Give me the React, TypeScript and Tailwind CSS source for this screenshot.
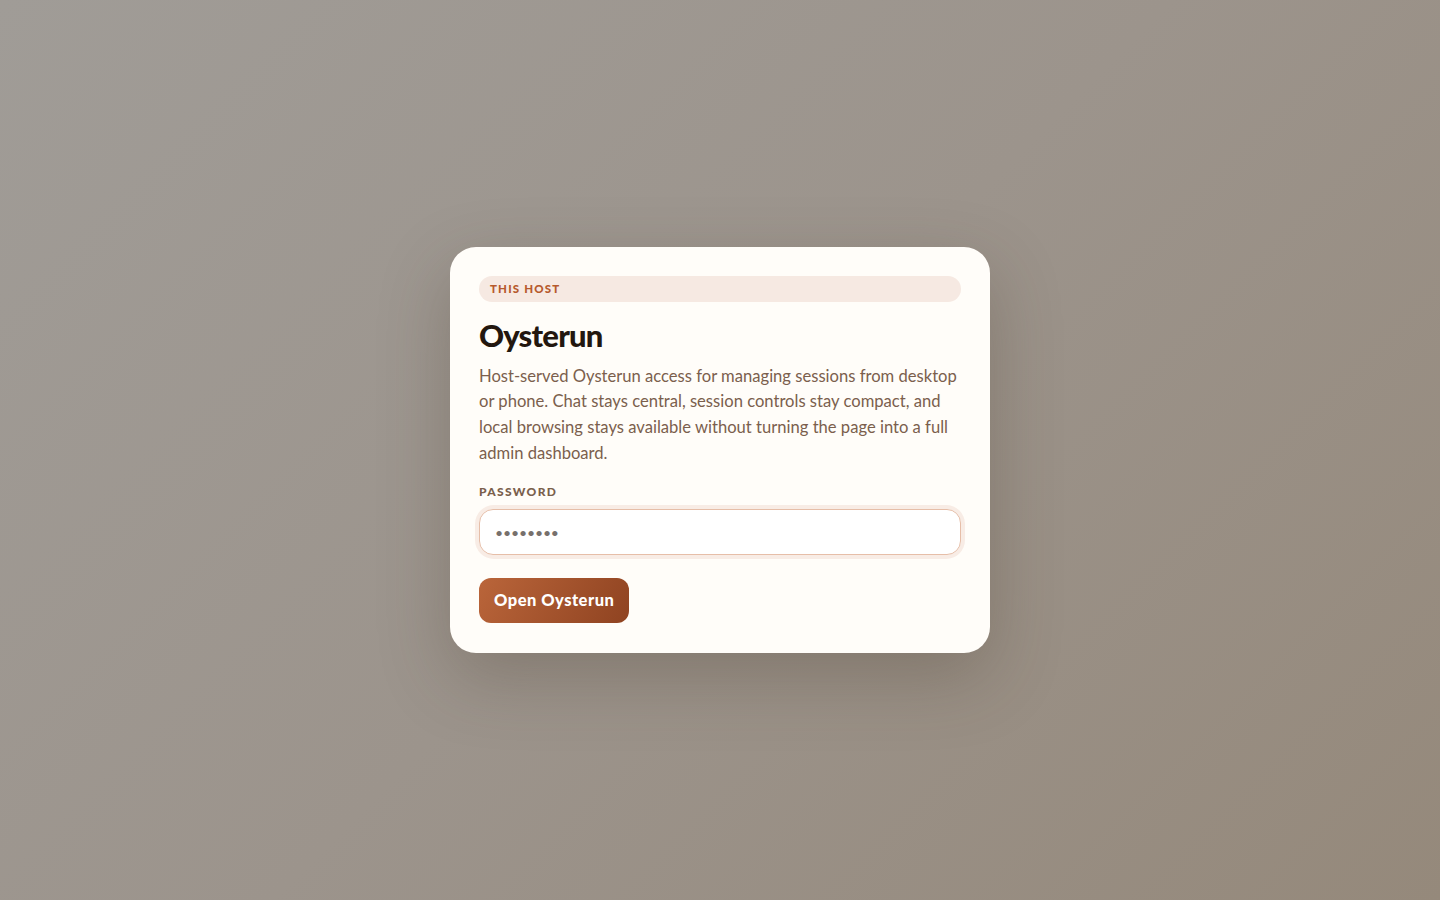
import React from "react";

export default function App() {
  return (
    <div
      className="min-h-screen w-full flex items-center justify-center bg-[linear-gradient(135deg,#a09c97_0%,#9c948c_50%,#95897b_100%)]"
      style={{ fontFamily: "Lato, 'Noto Sans', sans-serif" }}
    >
      <div className="w-[540px] rounded-[26px] bg-[#fffdf9] px-[29px] pt-[29px] pb-[30px] shadow-[0_24px_70px_rgba(70,55,40,0.28)]">
        <div className="h-[26px] rounded-full bg-[#f6e9e2] flex items-center pl-[11px]">
          <span className="text-[11.5px] font-black tracking-[0.1em] text-[#b65a2d] uppercase leading-none">
            This host
          </span>
        </div>
        <h1 className="mt-[15px] text-[31px] leading-[36px] font-black tracking-[-0.025em] text-[#23170f]">
          Oysterun
        </h1>
        <p className="mt-[11px] text-[16.6px] leading-[25.6px] text-[#7b5f4d]">
          Host-served Oysterun access for managing sessions from desktop or phone. Chat stays central, session
          controls stay compact, and local browsing stays available without turning the page into a full admin
          dashboard.
        </p>
        <div className="mt-[18px] text-[12px] leading-[16px] font-black tracking-[0.11em] text-[#7a604c] uppercase">
          Password
        </div>
        <div className="mt-[9px] rounded-[15px] ring-4 ring-[#f8ece5]">
          <input
            type="password"
            defaultValue="password"
            className="block w-full h-[46px] rounded-[14px] border border-[#e6bea8] bg-white px-[15px] text-[14px] tracking-[-0.01em] text-[#77706c] outline-none"
          />
        </div>
        <button className="mt-[23px] h-[45px] px-[15px] rounded-[12px] bg-[linear-gradient(120deg,#ba653a_0%,#8f4321_100%)] text-white text-[16.5px] font-black tracking-[0.03em]">
          Open Oysterun
        </button>
      </div>
    </div>
  );
}
